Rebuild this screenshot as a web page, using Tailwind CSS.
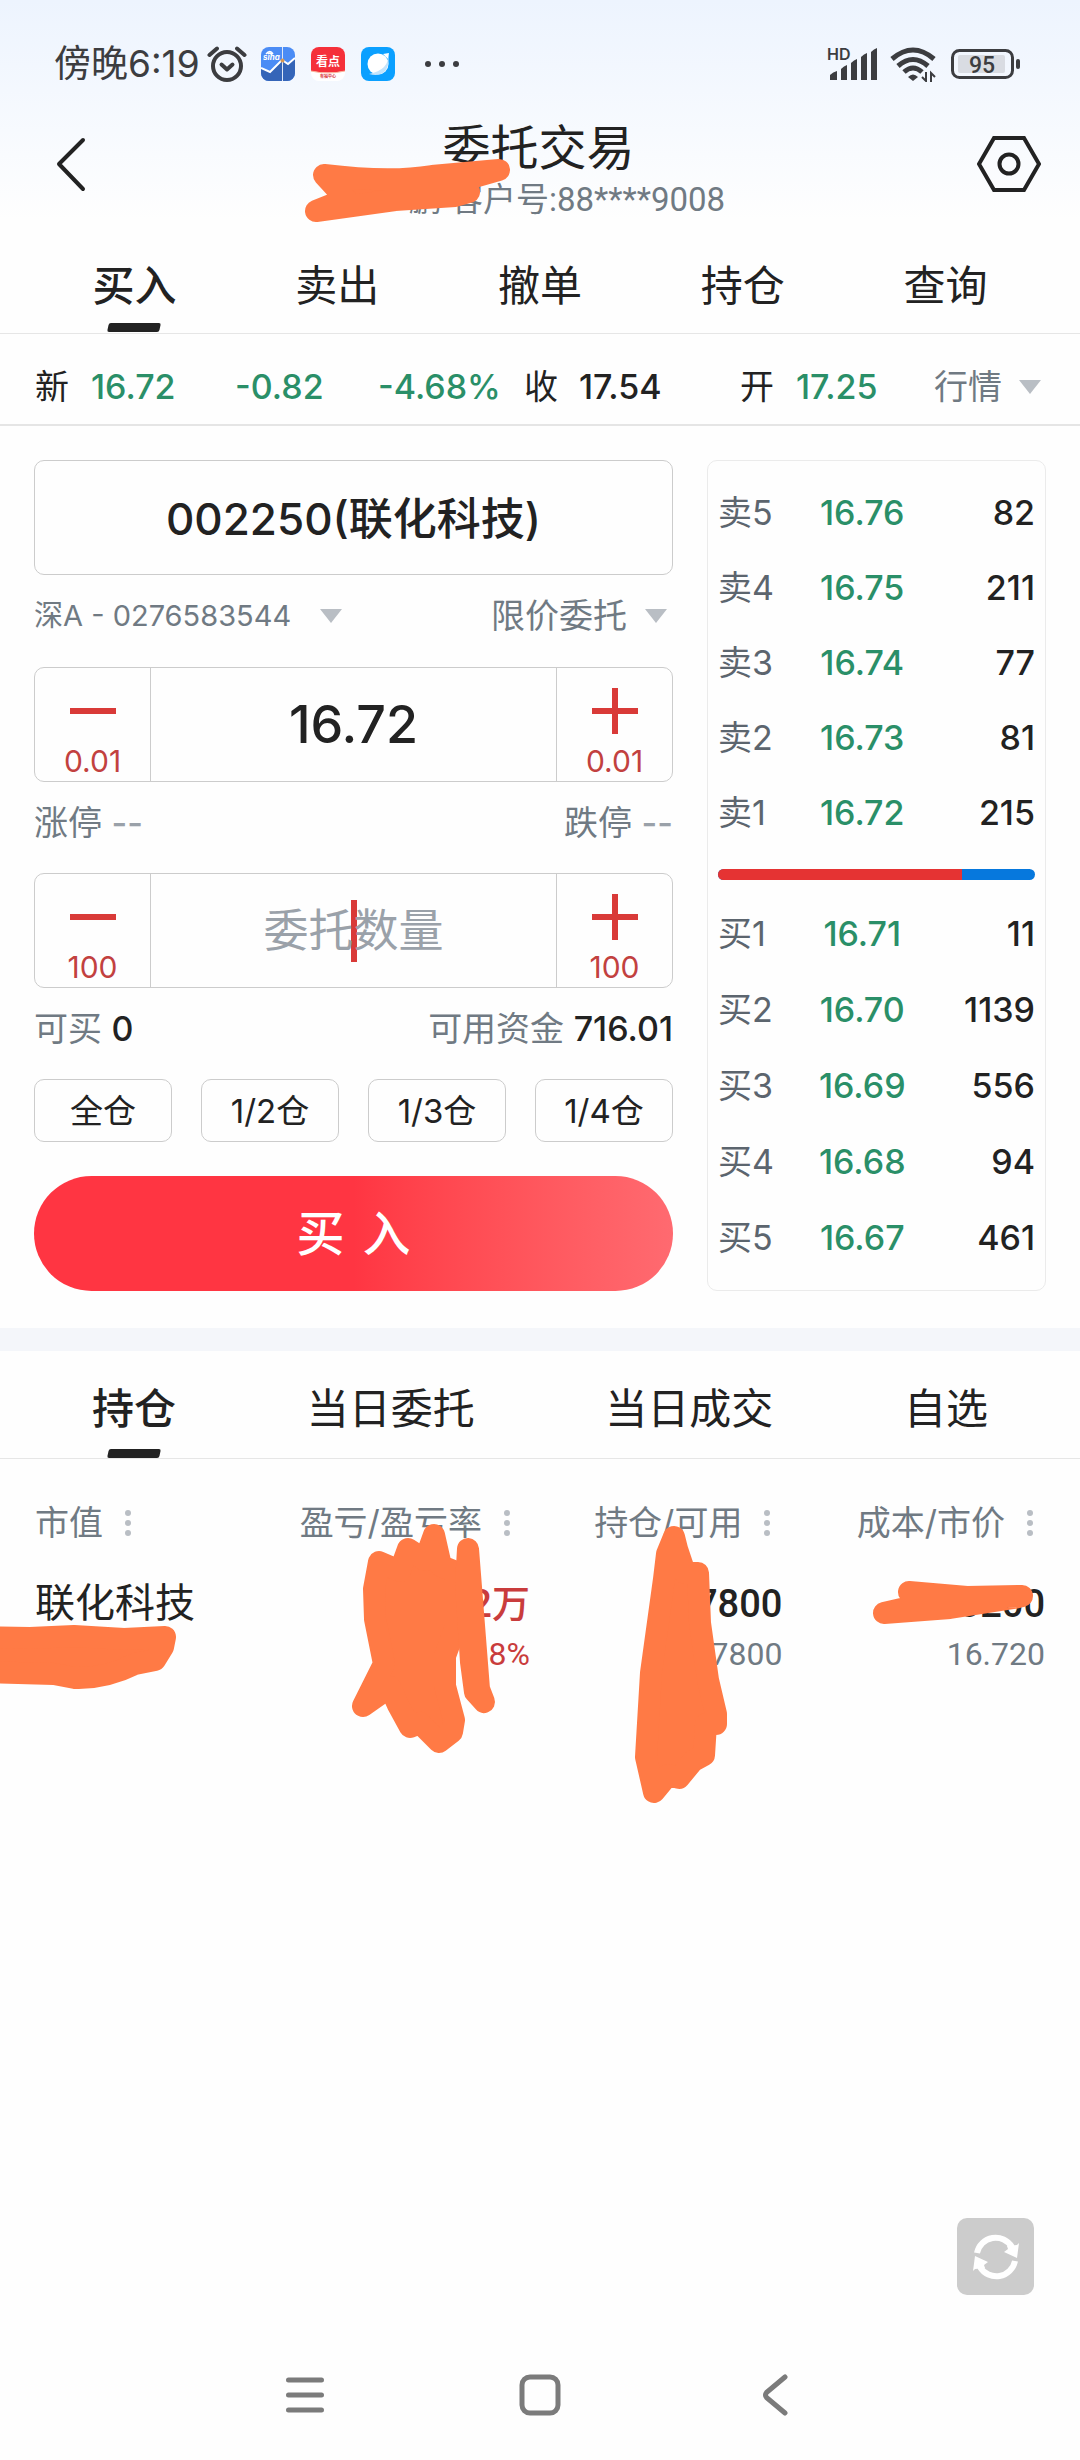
<!DOCTYPE html>
<html lang="zh-CN">
<head>
  <meta charset="UTF-8" />
  <meta name="viewport" content="width=device-width, initial-scale=1.0"/>
  <title>委托交易</title>
  <script src="https://cdn.jsdelivr.net/npm/@tailwindcss/browser@4"></script>
</head>
<body class="bg-[#fefefe] min-h-screen flex flex-col text-[#222] font-['Inter','Noto_Sans_CJK_SC',sans-serif]">

  <!-- 页头 -->
  <header class="relative bg-linear-to-b from-[#edf4fe] to-[#fefefe] to-[220px]">

    <!-- 状态栏 -->
    <div class="h-[108px] pt-5 pl-[54px] pr-[60px] flex items-center text-[#3c3d40]">
      <span class="text-[37px] leading-[44px]">傍晚6:19</span>
      <svg class="w-10 h-9 ml-[7px]" viewBox="0 0 40 36" fill="none" stroke="currentColor" stroke-width="4">
        <circle cx="20" cy="20" r="14"/>
        <path d="M14.500 18.500l5.500 5 5.500-5" stroke-linecap="round" stroke-linejoin="round"/>
        <path d="M2.500 9L10 2.500M37.500 9L30 2.500" stroke-linecap="round"/>
      </svg>
      <svg class="w-[34px] h-[34px] ml-[14px]" viewBox="0 0 34 34">
        <rect width="34" height="34" rx="8" fill="#4b8cf5"/>
        <path d="M0 21l9 4 12-12 6 4 7-6v15a8 8 0 0 1-8 8H8a8 8 0 0 1-8-8z" fill="#3565b8"/>
        <path d="M0 21l9 4 12-12 6 4 7-6" fill="none" stroke="#fff" stroke-width="2"/>
        <path d="M21.500 0v34" stroke="#dfe8f8" stroke-width="1"/>
        <circle cx="21.500" cy="13.500" r="2" fill="#d99a55"/>
        <path d="M5 7q4-5 7 0M7 7q2-2 4 1" fill="none" stroke="#fff" stroke-width="1.500"/>
        <text x="2" y="13" font-size="8" font-style="italic" font-weight="bold" fill="#fff">sina</text>
      </svg>
      <svg class="w-[34px] h-[34px] ml-4" viewBox="0 0 34 34">
        <rect width="34" height="34" rx="8" fill="#fff"/>
        <path d="M8 0h18a8 8 0 0 1 8 8v16q-17 3-34 0V8a8 8 0 0 1 8-8z" fill="#f5303a"/>
        <path d="M0 24q17 4 34 0" fill="none" stroke="#f9b49a" stroke-width="1"/>
        <text x="17" y="19" font-size="12" font-weight="bold" fill="#fff" text-anchor="middle">看点</text>
        <text x="17" y="31" font-size="4" font-weight="bold" fill="#d8323a" text-anchor="middle">有福中心</text>
      </svg>
      <svg class="w-[34px] h-[34px] ml-4" viewBox="0 0 34 34">
        <rect width="34" height="34" rx="8" fill="#0ba0ff"/>
        <circle cx="17" cy="17" r="10.500" fill="#fff"/>
        <path d="M27 7q1 8-4 13t-15 7q12 3 17-4 4-7 2-16z" fill="#c4e4fb"/>
        <path d="M22 7l6-1-1 6z" fill="#fff"/>
      </svg>
      <svg class="w-[36px] h-2 ml-[29px]" viewBox="0 0 36 8" fill="currentColor">
        <circle cx="4" cy="4" r="3"/><circle cx="18" cy="4" r="3"/><circle cx="32" cy="4" r="3"/>
      </svg>

      <svg class="w-[52px] h-9 ml-auto overflow-visible" viewBox="0 0 52 36" fill="currentColor">
        <text x="0" y="14" font-size="16" font-weight="600">HD</text>
        <path d="M3 34v-5q3-3 7-4v9zM14 34V23q3-3 6-4v15zM24 34V17q3-3 6-4v21zM34 34V11q3-3 6-4v27zM44 34V6q3-3 6-4v32z"/>
      </svg>
      <svg class="w-[46px] h-9 ml-[11px]" viewBox="0 0 46 36" fill="none" stroke="currentColor" stroke-width="5">
        <path d="M2 13Q23-5 44 13M8 20Q23 7 38 20M14 26Q23 18 32 26"/>
        <path d="M18 31q5-5 10 0l-5 4z" fill="currentColor" stroke="none"/>
        <path d="M36 26v9l-4-4M41 36v-9l4 4" stroke-width="2"/>
      </svg>
      <svg class="w-[69px] h-8 ml-[15px]" viewBox="0 0 69 32">
        <rect x="1.500" y="2.500" width="60" height="27" rx="7" fill="none" stroke="currentColor" stroke-width="3"/>
        <rect x="7" y="7" width="47" height="18" rx="2" fill="#d9dce2"/>
        <rect x="65" y="11" width="4" height="10" rx="2" fill="currentColor"/>
        <text x="31" y="24.500" font-size="23" font-family="Roboto" font-weight="500" fill="currentColor" text-anchor="middle">95</text>
      </svg>
    </div>

    <!-- 标题 -->
    <div class="h-28 flex items-center justify-between pl-[56px] pr-[39px]">
      <button aria-label="返回">
        <svg class="w-8 h-14" viewBox="0 0 32 56" fill="none" stroke="#222" stroke-width="4" stroke-linecap="round" stroke-linejoin="round">
          <path d="M27 4L3 28l24 25"/>
        </svg>
      </button>
      <div class="pt-3 pl-3 text-center">
        <h1 class="text-[48px] leading-[60px]">委托交易</h1>
        <p class="text-[33px] leading-[44px] text-[#707a83] font-['Roboto','Noto_Sans_CJK_SC',sans-serif]">****鹏 客户号:88****9008</p>
      </div>
      <button aria-label="设置">
        <svg class="w-16 h-14" viewBox="0 0 64 56" fill="none" stroke="#222" stroke-width="4">
          <path d="M17 2h30l15 26-15 26H17L2 28z"/>
          <circle cx="32" cy="28" r="9.500"/>
        </svg>
      </button>
    </div>
    <svg class="absolute left-[300px] top-[150px] w-[216px] h-[80px] pointer-events-none" viewBox="300 150 216 80" fill="#ff7a45" stroke="#ff7a45" stroke-width="22" stroke-linejoin="round">
      <path d="M324 175q66 8 108 1l67-6-35 10 5 12-14 4-60 4-79 11 30-12z"/>
    </svg>

    <!-- 交易菜单 -->
    <nav class="h-[114px] px-[33px] grid grid-cols-5 text-[42px] leading-[48px] text-center border-b border-[#e6e6e6]">
      <a href="#" class="pt-[42px] font-medium flex flex-col items-center">买入
        <span class="w-[52px] h-[9px] mt-[13px] bg-[#222] rounded-xs -skew-x-12"></span>
      </a>
      <a href="#" class="pt-[42px]">卖出</a>
      <a href="#" class="pt-[42px]">撤单</a>
      <a href="#" class="pt-[42px]">持仓</a>
      <a href="#" class="pt-[42px]">查询</a>
    </nav>
  </header>

  <!-- 行情 -->
  <div class="h-[92px] pt-4 px-[35px] grid grid-cols-[56fr_144fr_143fr_146fr_55fr_161fr_56fr_138fr_111fr] items-center text-[34px] leading-[44px] border-b-2 border-[#e5e5e5]">
    <span>新</span>
    <span class="font-medium text-[#2a8f68]">16.72</span>
    <span class="font-medium text-[#2a8f68]">-0.82</span>
    <span class="font-medium text-[#2a8f68]">-4.68%</span>
    <span>收</span>
    <span class="font-medium">17.54</span>
    <span>开</span>
    <span class="font-medium text-[#2a8f68]">17.25</span>
    <button class="flex items-center justify-between pr-1 text-[#707a83]">行情
      <svg class="w-[22px] h-[14px]" viewBox="0 0 22 14" fill="#b9bec4"><path d="M0 0h22L11 14z"/></svg>
    </button>
  </div>

  <main class="px-[34px] pt-[34px] pb-[37px] grid grid-cols-[minmax(0,639fr)_minmax(0,339fr)] gap-[34px]">

    <!-- 委托表单 -->
    <form onsubmit="return false">
      <input aria-label="证券代码" value="002250(联化科技)" class="block w-full h-[115px] pb-1 border border-[#ccc] rounded-[10px] text-center text-[44px] font-medium"/>

      <div class="h-[92px] pb-[11px] flex items-center text-[#707a83]">
        <select aria-label="股东账户" class="appearance-none text-[29px] leading-[44px]">
          <option>深A - 0276583544</option>
        </select>
        <svg class="w-[22px] h-[14px] ml-7" viewBox="0 0 22 14" fill="#b9bec4"><path d="M0 0h22L11 14z"/></svg>
        <select aria-label="委托方式" class="appearance-none ml-auto text-[34px] leading-[44px]">
          <option>限价委托</option>
        </select>
        <svg class="w-[22px] h-[14px] ml-[18px] mr-[6px]" viewBox="0 0 22 14" fill="#b9bec4"><path d="M0 0h22L11 14z"/></svg>
      </div>

      <div class="h-[115px] flex border border-[#ccc] rounded-[10px]">
        <button id="precoMenos" aria-label="价格减" class="w-[115px] pt-5 flex flex-col items-center text-[#c2413f]">
          <svg class="w-[46px] h-[46px]" viewBox="0 0 46 46" stroke="#d93a38" stroke-width="6"><path d="M0 23h46"/></svg>
          <span class="mt-[7px] text-[30px] leading-[40px]">0.01</span>
        </button>
        <input id="preco" aria-label="委托价格" value="16.72" class="flex-1 min-w-0 border-x border-[#ccc] text-center text-[52px] font-medium"/>
        <button id="precoMais" aria-label="价格加" class="w-[115px] pt-5 flex flex-col items-center text-[#c2413f]">
          <svg class="w-[46px] h-[46px]" viewBox="0 0 46 46" stroke="#d93a38" stroke-width="6"><path d="M0 23h46M23 0v46"/></svg>
          <span class="mt-[7px] text-[30px] leading-[40px]">0.01</span>
        </button>
      </div>

      <div class="h-[91px] pb-[10px] flex items-center justify-between text-[34px] leading-[44px] text-[#707a83]">
        <span>涨停 <span class="font-medium text-[#9aa1a9]">--</span></span>
        <span>跌停 <span class="font-medium text-[#9aa1a9]">--</span></span>
      </div>

      <div class="h-[115px] flex border border-[#ccc] rounded-[10px]">
        <button id="qtdMenos" aria-label="数量减" class="w-[115px] pt-5 flex flex-col items-center text-[#c2413f]">
          <svg class="w-[46px] h-[46px]" viewBox="0 0 46 46" stroke="#d93a38" stroke-width="6"><path d="M0 23h46"/></svg>
          <span class="mt-[7px] text-[30px] leading-[40px]">100</span>
        </button>
        <div class="relative flex-1 min-w-0 border-x border-[#ccc]">
          <span class="absolute left-1/2 top-1/2 -translate-x-1/2 -translate-y-1/2 w-[6px] h-[62px] bg-[#d93a38]"></span>
          <input id="qtd" aria-label="委托数量" placeholder="委托数量" class="relative w-full h-full text-center text-[45px] placeholder:text-[#9aa1a9]"/>
        </div>
        <button id="qtdMais" aria-label="数量加" class="w-[115px] pt-5 flex flex-col items-center text-[#c2413f]">
          <svg class="w-[46px] h-[46px]" viewBox="0 0 46 46" stroke="#d93a38" stroke-width="6"><path d="M0 23h46M23 0v46"/></svg>
          <span class="mt-[7px] text-[30px] leading-[40px]">100</span>
        </button>
      </div>

      <div class="h-[91px] pb-[10px] flex items-center justify-between text-[34px] leading-[44px] text-[#707a83]">
        <span>可买 <span class="font-medium text-[#222]">0</span></span>
        <span>可用资金 <span class="font-medium text-[#222]">716.01</span></span>
      </div>

      <div class="grid grid-cols-4 gap-[29px] text-[33px] leading-[44px]">
        <button class="h-[63px] border border-[#ccc] rounded-[10px]">全仓</button>
        <button class="h-[63px] border border-[#ccc] rounded-[10px]">1/2仓</button>
        <button class="h-[63px] border border-[#ccc] rounded-[10px]">1/3仓</button>
        <button class="h-[63px] border border-[#ccc] rounded-[10px]">1/4仓</button>
      </div>

      <button class="w-full h-[115px] mt-[34px] flex items-center justify-center gap-[18px] rounded-full bg-linear-to-r from-[#ff3542] from-50% to-[#ff6a70] text-white text-[48px] font-medium">
        <span>买</span><span>入</span>
      </button>
    </form>

    <!-- 五档盘口 -->
    <div class="pt-[14px] px-[10px] border border-[#ebebeb] rounded-[10px] text-[34px] leading-[44px] whitespace-nowrap">
      <table class="w-full table-fixed">
        <tbody>
          <tr class="h-[75px]"><th class="w-[30%] text-left font-normal text-[#5c656e]">卖5</th><td class="w-[31%] text-center font-medium text-[#2a8f68]">16.76</td><td class="text-right font-medium">82</td></tr>
          <tr class="h-[75px]"><th class="text-left font-normal text-[#5c656e]">卖4</th><td class="text-center font-medium text-[#2a8f68]">16.75</td><td class="text-right font-medium">211</td></tr>
          <tr class="h-[75px]"><th class="text-left font-normal text-[#5c656e]">卖3</th><td class="text-center font-medium text-[#2a8f68]">16.74</td><td class="text-right font-medium">77</td></tr>
          <tr class="h-[75px]"><th class="text-left font-normal text-[#5c656e]">卖2</th><td class="text-center font-medium text-[#2a8f68]">16.73</td><td class="text-right font-medium">81</td></tr>
          <tr class="h-[75px]"><th class="text-left font-normal text-[#5c656e]">卖1</th><td class="text-center font-medium text-[#2a8f68]">16.72</td><td class="text-right font-medium">215</td></tr>
        </tbody>
      </table>
      <div class="h-[11px] mt-[19px] mb-4 rounded-full bg-[#0678dd] overflow-hidden">
        <div class="h-full bg-[#e53333]" style="width: 77%"></div>
      </div>
      <table class="w-full table-fixed">
        <tbody>
          <tr class="h-[76px]"><th class="w-[30%] text-left font-normal text-[#5c656e]">买1</th><td class="w-[31%] text-center font-medium text-[#2a8f68]">16.71</td><td class="text-right font-medium">11</td></tr>
          <tr class="h-[76px]"><th class="text-left font-normal text-[#5c656e]">买2</th><td class="text-center font-medium text-[#2a8f68]">16.70</td><td class="text-right font-medium">1139</td></tr>
          <tr class="h-[76px]"><th class="text-left font-normal text-[#5c656e]">买3</th><td class="text-center font-medium text-[#2a8f68]">16.69</td><td class="text-right font-medium">556</td></tr>
          <tr class="h-[76px]"><th class="text-left font-normal text-[#5c656e]">买4</th><td class="text-center font-medium text-[#2a8f68]">16.68</td><td class="text-right font-medium">94</td></tr>
          <tr class="h-[76px]"><th class="text-left font-normal text-[#5c656e]">买5</th><td class="text-center font-medium text-[#2a8f68]">16.67</td><td class="text-right font-medium">461</td></tr>
        </tbody>
      </table>
    </div>
  </main>

  <div class="h-[23px] bg-[#f4f6fa]"></div>

  <!-- 持仓菜单 -->
  <nav class="h-[108px] px-[92px] flex justify-between text-[42px] leading-[48px] border-b border-[#e6e6e6]">
    <a href="#" class="pt-[34px] font-medium flex flex-col items-center">持仓
      <span class="w-[52px] h-[9px] mt-4 bg-[#222] rounded-xs -skew-x-12"></span>
    </a>
    <a href="#" class="pt-[34px]">当日委托</a>
    <a href="#" class="pt-[34px]">当日成交</a>
    <a href="#" class="pt-[34px]">自选</a>
  </nav>

  <!-- 持仓列表 -->
  <section class="relative px-[35px] pt-[38px]">
    <table class="w-full table-fixed text-right">
      <thead class="text-[34px] leading-[52px] text-[#707a83]">
        <tr>
          <th class="w-[20%] font-normal">
            <div class="flex items-center gap-[22px]">市值
              <svg class="w-[6px] h-[26px]" viewBox="0 0 6 26" fill="#b9bec4"><circle cx="3" cy="3" r="3"/><circle cx="3" cy="13" r="3"/><circle cx="3" cy="23" r="3"/></svg>
            </div>
          </th>
          <th class="w-[29%] font-normal">
            <div class="flex items-center justify-end gap-[22px] pr-5">盈亏/盈亏率
              <svg class="w-[6px] h-[26px]" viewBox="0 0 6 26" fill="#b9bec4"><circle cx="3" cy="3" r="3"/><circle cx="3" cy="13" r="3"/><circle cx="3" cy="23" r="3"/></svg>
            </div>
          </th>
          <th class="w-[25%] font-normal">
            <div class="flex items-center justify-end gap-[22px] pr-3">持仓/可用
              <svg class="w-[6px] h-[26px]" viewBox="0 0 6 26" fill="#b9bec4"><circle cx="3" cy="3" r="3"/><circle cx="3" cy="13" r="3"/><circle cx="3" cy="23" r="3"/></svg>
            </div>
          </th>
          <th class="w-[26%] font-normal">
            <div class="flex items-center justify-end gap-[22px] pr-3">成本/市价
              <svg class="w-[6px] h-[26px]" viewBox="0 0 6 26" fill="#b9bec4"><circle cx="3" cy="3" r="3"/><circle cx="3" cy="13" r="3"/><circle cx="3" cy="23" r="3"/></svg>
            </div>
          </th>
        </tr>
      </thead>
      <tbody class="font-['Roboto','Noto_Sans_CJK_SC',sans-serif] align-top">
        <tr>
          <td class="pt-[29px] text-left whitespace-nowrap text-[40px] leading-[52px]">联化科技</td>
          <td class="pt-[29px] text-[#c93c3c]">
            <p class="text-[38px] leading-[52px] font-medium">2万</p>
            <p class="text-[32px] leading-[48px]">8%</p>
          </td>
          <td class="pt-[29px]">
            <p class="text-[38px] leading-[52px] font-medium">7800</p>
            <p class="text-[32px] leading-[48px] text-[#707a83]">7800</p>
          </td>
          <td class="pt-[29px]">
            <p class="text-[38px] leading-[52px] font-medium">0200</p>
            <p class="text-[32px] leading-[48px] text-[#707a83]">16.720</p>
          </td>
        </tr>
      </tbody>
    </table>
    <!-- 涂抹遮挡 -->
    <svg class="absolute left-0 top-0 w-full pointer-events-none" viewBox="0 0 1080 350" fill="#ff7a45" stroke="#ff7a45" stroke-width="22" stroke-linejoin="round">
      <path d="M-20 178L30 179l44-2 50 3 41-2-2 10-8 13-20 4q-30 15-60 14l-21-4-74-2z"/>
      <path d="M379 103l-5 27 1 30 9 45-21 42 27-19 8 18 12 22 10-4 19 19 13-10 2-12-9-34v-30l11-30v-54l-15-6-7-31-9 25-17-11-8 22z"/>
      <path d="M468 90l11 140 5 13-9-10-4-30-5-78z"/>
      <path d="M674 78l-7 17-3 25-13 94-5 84 8 35 14-17 11 3 14-17 11-6 2-31h10v-10l-8-34-8-57-2-50h-13l-8-24z"/>
      <path d="M909 133l58 5 55-1-8 2-64 10-66 5 35-8z"/>
    </svg>
  </section>

  <!-- 刷新 -->
  <div class="flex-1 flex items-end justify-end pb-[35px] pr-[46px]">
    <button aria-label="刷新" class="w-[77px] h-[77px] flex items-center justify-center rounded-[10px] bg-[#ccc]">
      <svg class="w-[50px] h-[46px]" viewBox="0 0 50 46" fill="none" stroke="#fff" stroke-width="6">
        <path d="M6 19A19 19 0 0 1 41 13M44 27A19 19 0 0 1 9 33"/>
        <path d="M33 18l4-3-1-3 10-1 2-2-2 15zM17 28l-4 3 1 3-10 1-2 2 2-15z" fill="#fff" stroke="none"/>
      </svg>
    </button>
  </div>

  <!-- 系统导航 -->
  <footer class="h-[130px] px-[188px] grid grid-cols-3 items-center justify-items-center">
    <button aria-label="菜单">
      <svg class="w-10 h-9" viewBox="0 0 40 36" stroke="#7b7b7b" stroke-width="5" stroke-linecap="round"><path d="M3.500 3h33M3.500 18h33M3.500 33h33"/></svg>
    </button>
    <button aria-label="主页">
      <svg class="w-[42px] h-[42px]" viewBox="0 0 42 42" fill="none" stroke="#7b7b7b" stroke-width="5"><rect x="3" y="3" width="36" height="36" rx="8"/></svg>
    </button>
    <button aria-label="后退">
      <svg class="w-[26px] h-[42px]" viewBox="0 0 26 42" fill="none" stroke="#7b7b7b" stroke-width="5" stroke-linecap="round" stroke-linejoin="round"><path d="M23 3L4.500 18.500q-2 2.500 0 5L23 39"/></svg>
    </button>
  </footer>

  <script>
    const preco = document.getElementById("preco");
    const qtd = document.getElementById("qtd");

    function mudarPreco(delta) {
      preco.value = Math.max(0, Number(preco.value) + delta).toFixed(2);
    }

    function mudarQtd(delta) {
      qtd.value = Math.max(0, Number(qtd.value) + delta);
    }

    document.getElementById("precoMenos").onclick = () => mudarPreco(-0.01);
    document.getElementById("precoMais").onclick = () => mudarPreco(0.01);
    document.getElementById("qtdMenos").onclick = () => mudarQtd(-100);
    document.getElementById("qtdMais").onclick = () => mudarQtd(100);
  </script>
</body>
</html>
